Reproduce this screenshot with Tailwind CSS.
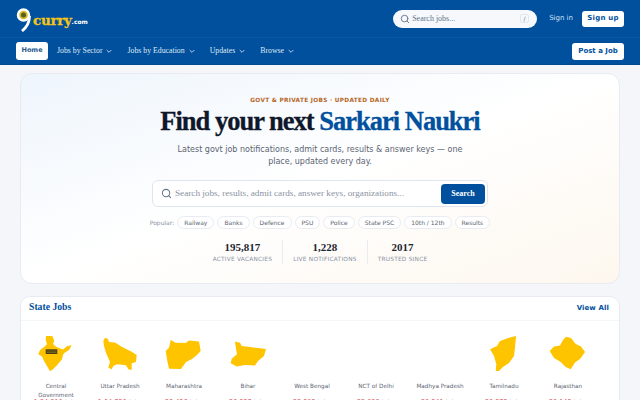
<!DOCTYPE html>
<html><head><meta charset="utf-8"><script src="https://cdn.jsdelivr.net/npm/@tailwindcss/browser@4"></script></head>
<body class="w-[640px] h-[400px] overflow-hidden bg-[#f4f6fa] font-['DejaVu_Sans',sans-serif]">
<header class="bg-[#00509d] h-[65px] flex flex-col border-b border-[#004a91]">
  <div class="h-[38px] flex items-center justify-between pl-[16px] pr-[16px] border-b border-[#0a58a3]">
    <div class="flex items-end h-[28px] relative top-[-1px]">
      <svg width="17" height="28" viewBox="0 0 17 28" class="shrink-0"><circle cx="7.500" cy="11" r="5.500" fill="#d9b92a" stroke="#fff" stroke-width="2.500"/><path d="M13.500 12 C13.500 19 11 23 6 27" fill="none" stroke="#fff" stroke-width="2.800"/><circle cx="7.500" cy="11" r="2.500" fill="#55601f"/></svg>
      <span class="font-['DejaVu_Serif',serif] font-bold text-[13.500px] leading-[20px] tracking-[-0.300px] [-webkit-text-stroke:0.3px_currentColor] text-[#f5c518] mb-[2px]">curry</span><span class="font-['DejaVu_Sans',sans-serif] font-bold text-[6px] leading-[10px] text-white mb-[5px]">.com</span>
    </div>
    <div class="flex items-center">
      <div class="w-[144px] h-[18px] rounded-full bg-[#f6f8fb] flex items-center pl-[7px] pr-[8px] mr-[12px]">
        <svg width="10" height="10" viewBox="0 0 24 24" fill="none" stroke="#64748b" stroke-width="2.200" stroke-linecap="round"><circle cx="11" cy="11" r="8"/><path d="M21 21l-4.300-4.300"/></svg>
        <span class="font-['Liberation_Serif',serif] text-[8px] text-[#64748b] ml-[2px] flex-1">Search jobs...</span>
        <span class="w-[9px] h-[9px] border border-[#e2e8f0] rounded-[2px] text-[6px] leading-[7px] text-center text-[#64748b]">/</span>
      </div>
      <span class="text-[7px] text-[#cfe0f2] mr-[9px]">Sign in</span>
      <span class="h-[16px] w-[42px] bg-white rounded-[3px] text-[7px] font-bold text-[#00509d] flex items-center justify-center tracking-[0.200px]">Sign up</span>
    </div>
  </div>
  <nav class="h-[26px] flex items-center justify-between pl-[16px] pr-[16px]">
    <div class="flex items-center font-['Liberation_Serif',serif] text-[7.800px] text-[#dfe9f5]">
      <span class="w-[32px] h-[18px] bg-white rounded-[3px] flex items-center justify-center font-['DejaVu_Sans',sans-serif] text-[6.500px] font-semibold text-[#2a5a90] mr-[9px]">Home</span>
      <span class="mr-[14px] flex items-center gap-[3px]">Jobs by Sector<svg width="8" height="8" viewBox="0 0 24 24" fill="none" stroke="currentColor" stroke-width="2.500"><path d="M5 9l7 7 7-7"/></svg></span>
      <span class="mr-[14px] flex items-center gap-[3px]">Jobs by Education<svg width="8" height="8" viewBox="0 0 24 24" fill="none" stroke="currentColor" stroke-width="2.500"><path d="M5 9l7 7 7-7"/></svg></span>
      <span class="mr-[14px] flex items-center gap-[3px]">Updates<svg width="8" height="8" viewBox="0 0 24 24" fill="none" stroke="currentColor" stroke-width="2.500"><path d="M5 9l7 7 7-7"/></svg></span>
      <span class="flex items-center gap-[3px]">Browse<svg width="8" height="8" viewBox="0 0 24 24" fill="none" stroke="currentColor" stroke-width="2.500"><path d="M5 9l7 7 7-7"/></svg></span>
    </div>
    <span class="h-[17px] w-[52px] bg-white rounded-[3px] text-[7px] font-bold text-[#00509d] flex items-center justify-center">Post a Job</span>
  </nav>
</header>
<main class="px-[20px] pt-[8px]">
  <section class="h-[211px] rounded-[12px] border border-[#e8ecf2] bg-gradient-to-br from-[#eef5fc] via-white to-[#fdf7ee] flex flex-col items-center pt-[21px]">
    <div class="text-[5.800px] leading-[10px] font-bold tracking-[0.300px] text-[#b5651d]">GOVT &amp; PRIVATE JOBS · UPDATED DAILY</div>
    <h1 class="font-['Liberation_Serif',serif] font-bold text-[26.500px] leading-[32px] tracking-[-1px] [-webkit-text-stroke:0.3px_currentColor] text-[#0f172a] whitespace-nowrap">Find your next <span class="text-[#00509d]">Sarkari Naukri</span></h1>
    <p class="text-[8px] leading-[12px] text-[#5b6472] text-center w-[300px] mt-[7px]">Latest govt job notifications, admit cards, results &amp; answer keys — one place, updated every day.</p>
    <div class="w-[336px] h-[27px] rounded-[6px] border border-[#dfe5ee] bg-white flex items-center pl-[8px] pr-[2px] mt-[12px] shrink-0">
      <svg width="11" height="11" viewBox="0 0 24 24" fill="none" stroke="#64748b" stroke-width="2.200" stroke-linecap="round"><circle cx="11" cy="11" r="8"/><path d="M21 21l-4.300-4.300"/></svg>
      <span class="font-['Liberation_Serif',serif] text-[9.200px] text-[#8a93a3] ml-[3px] flex-1">Search jobs, results, admit cards, answer keys, organizations...</span>
      <span class="w-[44px] h-[20px] rounded-[4px] bg-[#00509d] text-white font-['Liberation_Serif',serif] font-bold text-[8px] flex items-center justify-center">Search</span>
    </div>
    <div class="flex items-center gap-[3px] mt-[9px] text-[6px] text-[#5b6472]">
      <span class="text-[#8a93a3]">Popular:</span>
      <span class="h-[13px] px-[6px] rounded-full border border-[#e8ecf2] bg-white flex items-center">Railway</span>
      <span class="h-[13px] px-[6px] rounded-full border border-[#e8ecf2] bg-white flex items-center">Banks</span>
      <span class="h-[13px] px-[6px] rounded-full border border-[#e8ecf2] bg-white flex items-center">Defence</span>
      <span class="h-[13px] px-[6px] rounded-full border border-[#e8ecf2] bg-white flex items-center">PSU</span>
      <span class="h-[13px] px-[6px] rounded-full border border-[#e8ecf2] bg-white flex items-center">Police</span>
      <span class="h-[13px] px-[6px] rounded-full border border-[#e8ecf2] bg-white flex items-center">State PSC</span>
      <span class="h-[13px] px-[6px] rounded-full border border-[#e8ecf2] bg-white flex items-center">10th / 12th</span>
      <span class="h-[13px] px-[6px] rounded-full border border-[#e8ecf2] bg-white flex items-center">Results</span>
    </div>
    <div class="flex items-center mt-[11px]">
      <div class="px-[10px] flex flex-col items-center border-r border-[#e8ecf2]"><b class="font-['Liberation_Serif',serif] text-[11px] leading-[14px] text-[#1e2530]">195,817</b><span class="text-[5.800px] leading-[10px] tracking-[0.250px] text-[#8a93a3]">ACTIVE VACANCIES</span></div>
      <div class="px-[10px] flex flex-col items-center border-r border-[#e8ecf2]"><b class="font-['Liberation_Serif',serif] text-[11px] leading-[14px] text-[#1e2530]">1,228</b><span class="text-[5.800px] leading-[10px] tracking-[0.250px] text-[#8a93a3]">LIVE NOTIFICATIONS</span></div>
      <div class="px-[10px] flex flex-col items-center"><b class="font-['Liberation_Serif',serif] text-[11px] leading-[14px] text-[#1e2530]">2017</b><span class="text-[5.800px] leading-[10px] tracking-[0.250px] text-[#8a93a3]">TRUSTED SINCE</span></div>
    </div>
  </section>
  <section class="mt-[12px] rounded-t-[10px] border border-[#e8ecf2] bg-white h-[140px] overflow-hidden">
    <div class="h-[24px] flex items-center justify-between pl-[8px] pr-[10px] border-b border-[#f3f5f8]">
      <span class="font-['Liberation_Serif',serif] font-bold text-[9.700px] text-[#00509d] pb-[2px]">State Jobs</span>
      <span class="text-[7px] font-bold text-[#00509d] tracking-[0.100px]">View All</span>
    </div>
    <div class="flex pl-[3px] pt-[13px] text-center">
      <div class="w-[64px] shrink-0 flex flex-col items-center">
        <svg width="40" height="40" viewBox="0 0 40 40"><polygon fill="#ffc400" points="10,2 16.300,2 18.300,7 17,10 20.500,13 27,15.500 31.300,12 35.700,11.300 33,16 28,19.300 27,21 26,25.300 21,31.300 17,35.300 14,37.300 12,33.700 8,27 6,22.500 2.300,20.300 4,16 8,13 11,10.300 9.700,6"/><rect x="9.700" y="15.300" width="11.600" height="4.700" fill="#4a3d10"/><path d="M10.500 17h10M10.500 18.500h10" stroke="#a08a30" stroke-width="0.500"/></svg>
        <div class="mt-[8px] h-[17px] w-[50px] text-[5.700px] leading-[8.500px] text-[#5b6472]">Central Government</div>
        <div class="mt-[-1px] text-[6.500px] leading-[8px] whitespace-nowrap"><span class="text-[#d0343a]">1,24,310</span> <span class="text-[#c4cad3]">Jobs</span></div>
      </div>
      <div class="w-[64px] shrink-0 flex flex-col items-center">
        <svg width="40" height="40" viewBox="0 0 40 40"><polygon fill="#ffc400" points="5,3.700 8,5 9,8 15,8.500 21.700,12.700 31.700,17.700 36.700,21 36,28 31.700,29.300 31.700,36 28.300,35.300 26,31.300 17,30.300 13.300,32 11.700,35.300 8.300,33.700 10,28 6,18.700 4,12 3.300,7"/></svg>
        <div class="mt-[8px] h-[17px] text-[5.700px] leading-[8.500px] text-[#5b6472]">Uttar Pradesh</div>
        <div class="mt-[-1px] text-[6.500px] leading-[8px] whitespace-nowrap"><span class="text-[#d0343a]">1,04,750</span> <span class="text-[#c4cad3]">Jobs</span></div>
      </div>
      <div class="w-[64px] shrink-0 flex flex-col items-center">
        <svg width="40" height="40" viewBox="0 0 40 40"><polygon fill="#ffc400" points="6.700,6 11.700,8.700 21.700,9 25,6.500 35,7.500 36.700,17 33,21 28,25 22,28 17,35 5,34.700 3.300,27 1.700,17 5,13.700"/></svg>
        <div class="mt-[8px] h-[17px] text-[5.700px] leading-[8.500px] text-[#5b6472]">Maharashtra</div>
        <div class="mt-[-1px] text-[6.500px] leading-[8px] whitespace-nowrap"><span class="text-[#d0343a]">28,456</span> <span class="text-[#c4cad3]">Jobs</span></div>
      </div>
      <div class="w-[64px] shrink-0 flex flex-col items-center">
        <svg width="40" height="40" viewBox="0 0 40 40"><polygon fill="#ffc400" points="7,7.500 12,8.700 13.700,12 22,13 38,15 36,22 30,27 27,31.500 17,31 8.700,32.500 2.700,29.300 3.700,24.700 9,20.300 8,15"/></svg>
        <div class="mt-[8px] h-[17px] text-[5.700px] leading-[8.500px] text-[#5b6472]">Bihar</div>
        <div class="mt-[-1px] text-[6.500px] leading-[8px] whitespace-nowrap"><span class="text-[#d0343a]">26,887</span> <span class="text-[#c4cad3]">Jobs</span></div>
      </div>
      <div class="w-[64px] shrink-0 flex flex-col items-center">
        <div class="w-[40px] h-[40px]"></div>
        <div class="mt-[8px] h-[17px] text-[5.700px] leading-[8.500px] text-[#5b6472]">West Bengal</div>
        <div class="mt-[-1px] text-[6.500px] leading-[8px] whitespace-nowrap"><span class="text-[#d0343a]">23,592</span> <span class="text-[#c4cad3]">Jobs</span></div>
      </div>
      <div class="w-[64px] shrink-0 flex flex-col items-center">
        <div class="w-[40px] h-[40px]"></div>
        <div class="mt-[8px] h-[17px] text-[5.700px] leading-[8.500px] text-[#5b6472]">NCT of Delhi</div>
        <div class="mt-[-1px] text-[6.500px] leading-[8px] whitespace-nowrap"><span class="text-[#d0343a]">22,038</span> <span class="text-[#c4cad3]">Jobs</span></div>
      </div>
      <div class="w-[64px] shrink-0 flex flex-col items-center">
        <div class="w-[40px] h-[40px]"></div>
        <div class="mt-[8px] h-[17px] text-[5.700px] leading-[8.500px] text-[#5b6472]">Madhya Pradesh</div>
        <div class="mt-[-1px] text-[6.500px] leading-[8px] whitespace-nowrap"><span class="text-[#d0343a]">20,541</span> <span class="text-[#c4cad3]">Jobs</span></div>
      </div>
      <div class="w-[64px] shrink-0 flex flex-col items-center">
        <svg width="40" height="40" viewBox="0 0 40 40"><polygon fill="#ffc400" points="32,2 31,13.700 30,22 25,29 19,33 15,37 11.700,37 12.300,30.300 10,22 6,15.300 13,12 16,7 25,3.700"/></svg>
        <div class="mt-[8px] h-[17px] text-[5.700px] leading-[8.500px] text-[#5b6472]">Tamilnadu</div>
        <div class="mt-[-1px] text-[6.500px] leading-[8px] whitespace-nowrap"><span class="text-[#d0343a]">20,272</span> <span class="text-[#c4cad3]">Jobs</span></div>
      </div>
      <div class="w-[64px] shrink-0 flex flex-col items-center">
        <svg width="40" height="40" viewBox="0 0 40 40"><polygon fill="#ffc400" points="18,2.700 23,4 27.700,10 33,12.500 37,18 32,25 27,28.500 22.700,35.300 17.700,33 12.700,28 6,24 1.700,17 6,12.500 12,11.500 15,6"/></svg>
        <div class="mt-[8px] h-[17px] text-[5.700px] leading-[8.500px] text-[#5b6472]">Rajasthan</div>
        <div class="mt-[-1px] text-[6.500px] leading-[8px] whitespace-nowrap"><span class="text-[#d0343a]">20,145</span> <span class="text-[#c4cad3]">Jobs</span></div>
      </div>
    </div>
  </section>
</main>
</body></html>
